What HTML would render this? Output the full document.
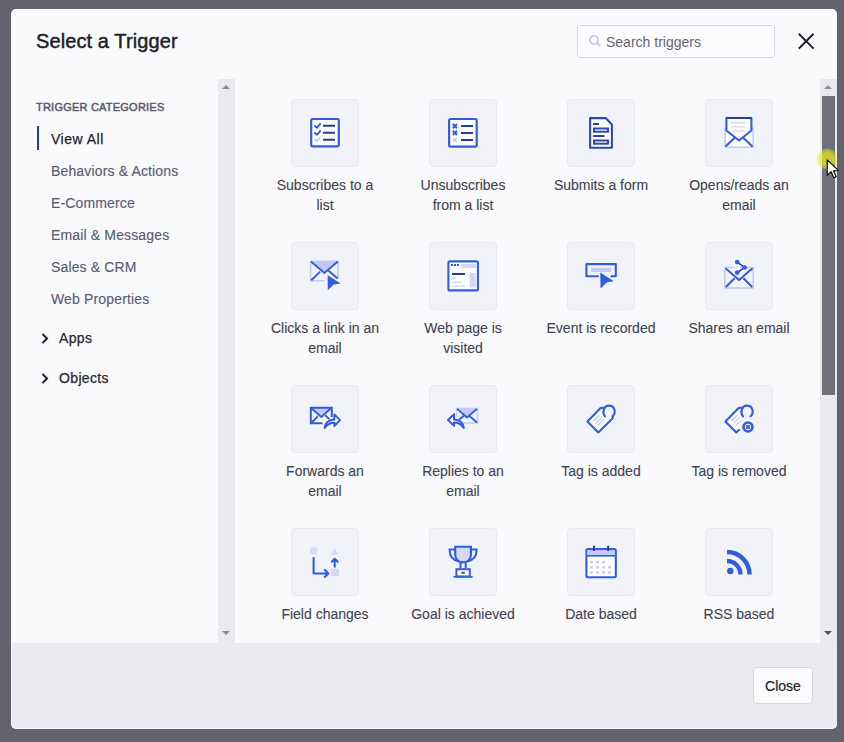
<!DOCTYPE html>
<html><head><meta charset="utf-8">
<style>
*{box-sizing:border-box;margin:0;padding:0}
html,body{width:844px;height:742px;overflow:hidden;background:#63636e;font-family:"Liberation Sans",sans-serif}
.modal{position:absolute;left:11px;top:9px;width:826px;height:720px;background:#fafafc;border-radius:5px;overflow:hidden}
.title{position:absolute;left:25px;top:20px;font-size:20px;line-height:24px;color:#1e1e26;font-weight:normal;letter-spacing:0.1px;-webkit-text-stroke:0.45px #1e1e26}
.search{position:absolute;left:566px;top:16px;width:198px;height:33px;border:1px solid #d6d6e0;border-radius:3px;background:#fcfcfe}
.search span{position:absolute;left:28px;top:8px;font-size:14px;line-height:16px;color:#626475}
.search svg{position:absolute;left:11px;top:9px}
.xclose{position:absolute;left:787px;top:24px}
.side{position:absolute;left:0;top:70px;width:207px;height:564px}
.cathead{position:absolute;left:25px;top:22px;font-size:11px;line-height:12px;font-weight:normal;color:#555868;letter-spacing:0.22px;-webkit-text-stroke:0.45px #555868}
.cat{position:absolute;left:40px;top:0;font-size:14px;line-height:16px;color:#5a5c76;letter-spacing:0.15px;-webkit-text-stroke:0.15px #5a5c76;margin-top:1px}
.cat.active{color:#22222a;letter-spacing:0.5px;-webkit-text-stroke:0.25px #22222a}
.bar{position:absolute;left:26px;top:47px;width:2px;height:24px;background:#1f3fa8}
.grp{position:absolute;left:48px;font-size:14px;line-height:16px;color:#26262e;letter-spacing:0.35px;-webkit-text-stroke:0.25px #26262e}
.chev{position:absolute;left:30px}
.track{position:absolute;background:#eaeaee}
.arrow{position:absolute;width:0;height:0;border-left:4px solid transparent;border-right:4px solid transparent}
.content{position:absolute;left:224px;top:70px;width:585px;height:564px}
.tile{position:absolute;width:68px;height:68px;background:#f2f2f9;border:1px solid #e9e9f3;border-radius:4px}
.tile svg{position:absolute;left:13px;top:13px}
.lbl{position:absolute;width:130px;text-align:center;font-size:14px;line-height:20px;color:#40424f;-webkit-text-stroke:0.1px #40424f}
.footer{position:absolute;left:1px;top:634px;width:825px;height:85px;background:#eaeaf0}
.btn{position:absolute;left:741px;top:24px;width:60px;height:37px;background:#fbfbfd;border:1px solid #d6d6de;border-radius:4px;font-size:14px;line-height:35px;padding-top:1px;text-align:center;color:#22222a;-webkit-text-stroke:0.2px #22222a}
.cursor{position:absolute;left:0;top:0}
</style></head>
<body>
<div class="modal">
  <div class="title">Select a Trigger</div>
  <div class="search">
    <svg width="12" height="12" viewBox="0 0 12 12"><circle cx="5" cy="5" r="4.1" fill="none" stroke="#c0bcd8" stroke-width="1.4"/><path d="M8 8L11.3 11.3" stroke="#c0bcd8" stroke-width="1.5"/></svg>
    <span>Search triggers</span>
  </div>
  <svg class="xclose" width="17" height="17" viewBox="0 0 17 17"><path d="M0.8 0.8L15.6 15.6M15.6 0.8L0.8 15.6" stroke="#1f2129" stroke-width="2"/></svg>

  <div class="side">
    <div class="cathead">TRIGGER CATEGORIES</div>
    <div class="bar"></div>
    <div class="cat active" style="top:51px">View All</div>
    <div class="cat" style="top:83px">Behaviors &amp; Actions</div>
    <div class="cat" style="top:115px">E-Commerce</div>
    <div class="cat" style="top:147px">Email &amp; Messages</div>
    <div class="cat" style="top:179px">Sales &amp; CRM</div>
    <div class="cat" style="top:211px">Web Properties</div>
    <svg class="chev" style="top:254px" width="8" height="11" viewBox="0 0 8 11"><path d="M1.5 1L6 5.5L1.5 10" fill="none" stroke="#22222a" stroke-width="2"/></svg>
    <div class="grp" style="top:251px">Apps</div>
    <svg class="chev" style="top:294px" width="8" height="11" viewBox="0 0 8 11"><path d="M1.5 1L6 5.5L1.5 10" fill="none" stroke="#22222a" stroke-width="2"/></svg>
    <div class="grp" style="top:291px">Objects</div>
  </div>
  <!-- sidebar scrollbar -->
  <div class="track" style="left:207px;top:70px;width:17px;height:564px"></div>
  <div class="arrow" style="left:211px;top:76px;border-bottom:4px solid #8a8a90"></div>
  <div class="arrow" style="left:211px;top:622px;border-top:4px solid #8a8a90"></div>
  <!-- content scrollbar -->
  <div class="track" style="left:809px;top:70px;width:17px;height:564px"></div>
  <div class="arrow" style="left:813px;top:76px;border-bottom:4px solid #909098"></div>
  <div class="arrow" style="left:813px;top:622px;border-top:4px solid #505056"></div>
  <div style="position:absolute;left:811px;top:87px;width:13px;height:299px;background:#707078"></div>

  <div class="tile" style="left:280px;top:90px"><svg width="40" height="40" viewBox="0 0 40 40"><rect x="6.2" y="6" width="27.6" height="27.4" rx="1.6" fill="#ffffff" stroke="#2f5dde" stroke-width="2.2"/>
<path d="M9.8 12.8L11.9 14.8L15.2 10.9M9.8 19.8L11.9 21.8L15.2 17.9" fill="none" stroke="#2f5dde" stroke-width="1.8" stroke-linecap="round" stroke-linejoin="round"/>
<path d="M10 26.6L11.9 28.4L14.8 25" fill="none" stroke="#c3c9f0" stroke-width="1.6" stroke-linecap="round"/>
<path d="M18 12.8H30M18 19.8H30M18 26.7H30" stroke="#2a3d94" stroke-width="2"/></svg></div>
  <div class="lbl" style="left:249px;top:166px">Subscribes to a<br>list</div>
  <div class="tile" style="left:418px;top:90px"><svg width="40" height="40" viewBox="0 0 40 40"><rect x="6.1" y="6" width="27.6" height="27.6" rx="1.6" fill="#ffffff" stroke="#2f5dde" stroke-width="2.2"/>
<path d="M9.8 11L14 15.2M14 11L9.8 15.2M9.8 17.8L14 22M14 17.8L9.8 22" fill="none" stroke="#2f5dde" stroke-width="2"/>
<path d="M10 25.2L13.6 28.8M13.6 25.2L10 28.8" fill="none" stroke="#c3c9f0" stroke-width="1.6"/>
<path d="M18 13H30M18 20H30M18 27H30" stroke="#2a3d94" stroke-width="2"/></svg></div>
  <div class="lbl" style="left:387px;top:166px">Unsubscribes<br>from a list</div>
  <div class="tile" style="left:556px;top:90px"><svg width="40" height="40" viewBox="0 0 40 40"><path d="M9.1 5.1H24.6L30.9 11.4V34.8H9.1Z" fill="#ffffff" stroke="#2f48b0" stroke-width="2.1" stroke-linejoin="round"/>
<path d="M12 11H18M12 23H23.5" stroke="#2f48b0" stroke-width="2"/>
<rect x="13" y="15.5" width="14" height="3.2" fill="none" stroke="#2f48b0" stroke-width="2"/>
<rect x="13" y="27.5" width="14" height="3.2" fill="none" stroke="#2f48b0" stroke-width="2"/></svg></div>
  <div class="lbl" style="left:525px;top:166px">Submits a form</div>
  <div class="tile" style="left:694px;top:90px"><svg width="40" height="40" viewBox="0 0 40 40"><rect x="6.1" y="15.2" width="28" height="19" fill="#ffffff" stroke="#c3c9f0" stroke-width="1.5"/>
<path d="M7.4 17.5V5H32.4V17.5L20 27.5Z" fill="#ffffff" stroke="#2f5dde" stroke-width="2.1" stroke-linejoin="round"/>
<path d="M7.4 5H32.4" stroke="#2a3d94" stroke-width="2.1"/>
<path d="M12 9.8H26M12 13.9H26M14 18H26" stroke="#d5daf3" stroke-width="1.4"/>
<path d="M6.5 33.5L16 24.5M33.5 33.5L24 24.5" stroke="#2f5dde" stroke-width="2.1"/></svg></div>
  <div class="lbl" style="left:663px;top:166px">Opens/reads an<br>email</div>
  <div class="tile" style="left:280px;top:233px"><svg width="40" height="40" viewBox="0 0 40 40"><path d="M5.6 5.2H33V23M19.5 24.8H5.6V5.2" fill="none" stroke="#c3c9f0" stroke-width="1.6"/>
<path d="M5.6 5.2H33L19.4 16.8Z" fill="#c3c9f0"/>
<path d="M6 5.5L19.4 17L32.8 5.5M6.3 24.3L15.2 15.6M32.6 22.5L23.5 14.8" fill="none" stroke="#2f5dde" stroke-width="1.9"/>
<path d="M22.6 19.2L35.6 27.5L28.7 28.5L22.8 34.3Z" fill="#2f5dde"/></svg></div>
  <div class="lbl" style="left:249px;top:309px">Clicks a link in an<br>email</div>
  <div class="tile" style="left:418px;top:233px"><svg width="40" height="40" viewBox="0 0 40 40"><rect x="5.4" y="5.4" width="29.5" height="29" rx="1.5" fill="#ffffff" stroke="#2f5dde" stroke-width="2.1"/>
<path d="M8 9H10M11 9H13M14 9H16" stroke="#2f5dde" stroke-width="2"/>
<rect x="18" y="8" width="15" height="4" fill="#d5daf3"/>
<path d="M9 18H22" stroke="#2a3d94" stroke-width="2"/>
<path d="M9 22.3H13M9 26.3H19M9 30.3H22" stroke="#d5daf3" stroke-width="1.5"/>
<rect x="26.5" y="17" width="6" height="14.5" fill="#d5daf3"/></svg></div>
  <div class="lbl" style="left:387px;top:309px">Web page is<br>visited</div>
  <div class="tile" style="left:556px;top:233px"><svg width="40" height="40" viewBox="0 0 40 40"><path d="M17.8 20.3H5.4V8.1H34.8V20.3H29.5" fill="none" stroke="#2f5dde" stroke-width="2.1" stroke-linejoin="round"/>
<rect x="10" y="11.8" width="20" height="4.2" fill="#c3c9f0"/>
<path d="M19.3 16.6L32.9 25.3L26 26.2L19.5 32.6Z" fill="#2f5dde"/></svg></div>
  <div class="lbl" style="left:525px;top:309px">Event is recorded</div>
  <div class="tile" style="left:694px;top:233px"><svg width="40" height="40" viewBox="0 0 40 40"><path d="M5.8 11.6H15.5M21 11.6H34.2V32H5.8V11.6" fill="none" stroke="#c3c9f0" stroke-width="1.5"/>
<path d="M6.5 12.3L20 24L33.5 12.3M6.8 31L15.6 22.3M33.2 31L24.4 22.3" fill="none" stroke="#2f5dde" stroke-width="2" stroke-linejoin="round"/>
<path d="M18.2 6.1L25.7 11.5L18.2 16.6" fill="none" stroke="#2a3d94" stroke-width="1.5"/>
<circle cx="18.2" cy="6.1" r="2.3" fill="#2f5dde"/><circle cx="25.7" cy="11.5" r="2.3" fill="#2f5dde"/><circle cx="18.2" cy="16.6" r="2.3" fill="#2f5dde"/></svg></div>
  <div class="lbl" style="left:663px;top:309px">Shares an email</div>
  <div class="tile" style="left:280px;top:376px"><svg width="40" height="40" viewBox="0 0 40 40"><path d="M5.8 8.8H26.8L16.3 17.6Z" fill="#c3c9f0"/>
<path d="M17.4 24.3H5.8V8.8H26.8V18" fill="none" stroke="#2f5dde" stroke-width="2"/>
<path d="M6.4 9.3L16.3 18L25.9 9.3M6.8 23.5L12.8 17.3M24.2 20.1L20.3 16.3" fill="none" stroke="#2f5dde" stroke-width="1.9"/>
<path d="M19.6 29C20.2 24.4 23.6 21 29.4 20.6V15.4L35 21.1L29.4 26.9V23.7C25 23.7 22 25.7 19.6 29Z" fill="#ffffff" stroke="#2f5dde" stroke-width="2" stroke-linejoin="round"/></svg></div>
  <div class="lbl" style="left:249px;top:452px">Forwards an<br>email</div>
  <div class="tile" style="left:418px;top:376px"><svg width="40" height="40" viewBox="0 0 40 40"><path d="M13.5 9.5H34.5L24 18.3Z" fill="#c3c9f0"/>
<path d="M13.5 9.5H34.5V24H18.5M13.5 9.5V18" fill="none" stroke="#c3c9f0" stroke-width="1.6"/>
<path d="M14 9.9L24 18.4L34 9.9M34 23.4L26.2 16.8M16.3 20.4L21.6 16" fill="none" stroke="#2f5dde" stroke-width="1.9"/>
<path d="M20.8 29C20.2 24.4 16.8 21 11 20.6V15.2L5 20.9L11 26.7V23.5C15.4 23.5 18.4 25.7 20.8 29Z" fill="#ffffff" stroke="#2f5dde" stroke-width="2" stroke-linejoin="round"/></svg></div>
  <div class="lbl" style="left:387px;top:452px">Replies to an<br>email</div>
  <div class="tile" style="left:556px;top:376px"><svg width="40" height="40" viewBox="0 0 40 40"><path d="M22.8 8.5L19.6 9.1L6.4 22.5L17.3 33.5L31.6 19.3L31.8 17" fill="#ffffff" stroke="#2f5dde" stroke-width="2.1" stroke-linejoin="round"/>
<path d="M12.5 22.3L18.5 16.3M14.6 24.4L20.6 18.4M16.7 26.5L22.7 20.5" stroke="#c3c9f0" stroke-width="1.3"/>
<path d="M24 17.4C21 14.2 22.4 6.6 28 6.6C33.2 6.6 35.8 13.2 31.6 17.2" fill="none" stroke="#2f5dde" stroke-width="2.1" stroke-linecap="round"/></svg></div>
  <div class="lbl" style="left:525px;top:452px">Tag is added</div>
  <div class="tile" style="left:694px;top:376px"><svg width="40" height="40" viewBox="0 0 40 40"><path d="M20.6 30.3L17.3 33.5L6.4 22.5L19.6 9.1L22.8 8.5" fill="#ffffff" stroke="#2f5dde" stroke-width="2.1" stroke-linejoin="round"/>
<path d="M12.5 22.3L18.5 16.3M14.6 24.4L20.6 18.4M16.7 26.5L21.5 21.7" stroke="#c3c9f0" stroke-width="1.3"/>
<path d="M24 17.4C21 14.2 22.4 6.6 28 6.6C33.2 6.6 35.8 13.2 31.6 17.2" fill="none" stroke="#2f5dde" stroke-width="2.1" stroke-linecap="round"/>
<circle cx="29" cy="28" r="4.5" fill="#ffffff" stroke="#2f5dde" stroke-width="2.6"/>
<path d="M27.2 26.2L30.8 29.8M30.8 26.2L27.2 29.8" stroke="#2f5dde" stroke-width="1.8"/></svg></div>
  <div class="lbl" style="left:663px;top:452px">Tag is removed</div>
  <div class="tile" style="left:280px;top:519px"><svg width="40" height="40" viewBox="0 0 40 40"><circle cx="8.6" cy="8.8" r="3.7" fill="#d5daf3"/>
<path d="M29.9 6.2L33.5 12.6H26.3Z" fill="#d5daf3"/>
<rect x="25.6" y="26.8" width="8.4" height="7.4" fill="#d5daf3"/>
<path d="M8.6 15.3V31.5H22.5" fill="none" stroke="#2f5dde" stroke-width="2.1" stroke-linejoin="round"/>
<path d="M19.8 28L23.3 31.5L19.8 35" fill="none" stroke="#2f5dde" stroke-width="2.1" stroke-linecap="round" stroke-linejoin="round"/>
<path d="M29.7 24.8V17M26.8 19.8L29.7 16.8L32.6 19.8" fill="none" stroke="#2f5dde" stroke-width="2.1" stroke-linecap="round" stroke-linejoin="round"/></svg></div>
  <div class="lbl" style="left:249px;top:595px">Field changes</div>
  <div class="tile" style="left:418px;top:519px"><svg width="40" height="40" viewBox="0 0 40 40"><path d="M12.2 4.8H28V12.5C28 17 24.8 20.4 20.1 20.4C15.4 20.4 12.2 17 12.2 12.5Z" fill="#d5daf3" stroke="#2f5dde" stroke-width="2.1"/>
<path d="M12.2 7.5H6.6C6.6 14 10 18.5 16 19.5M28 7.5H33.6C33.6 14 30.2 18.5 24.2 19.5" fill="none" stroke="#2f5dde" stroke-width="2"/>
<path d="M17.5 20.4V26.3M22.7 20.4V26.3" stroke="#2f5dde" stroke-width="2"/>
<rect x="13.4" y="27.2" width="13.4" height="7.3" fill="#ffffff" stroke="#2f5dde" stroke-width="2"/>
<path d="M10.5 34.8H29.6" stroke="#2f5dde" stroke-width="1.8"/>
<path d="M18.4 30.8H21.8" stroke="#2a3d94" stroke-width="1.8"/></svg></div>
  <div class="lbl" style="left:387px;top:595px">Goal is achieved</div>
  <div class="tile" style="left:556px;top:519px"><svg width="40" height="40" viewBox="0 0 40 40"><rect x="5.4" y="7.1" width="29.4" height="28.2" rx="1.6" fill="#ffffff" stroke="#2f5dde" stroke-width="2.1"/>
<rect x="6.4" y="8.1" width="27.4" height="5.6" fill="#c3c9f0"/>
<path d="M5.4 13.8H34.8" stroke="#2f5dde" stroke-width="1.6"/>
<path d="M13 3.8V9M27.2 3.8V9" stroke="#2a3d94" stroke-width="2"/>
<g fill="#c3c9f0"><rect x="9.3" y="18.8" width="2.6" height="2.6"/><rect x="15.3" y="18.8" width="2.6" height="2.6"/><rect x="21.3" y="18.8" width="2.6" height="2.6"/>
<rect x="9.3" y="24" width="2.6" height="2.6"/><rect x="15.3" y="24" width="2.6" height="2.6"/><rect x="21.3" y="24" width="2.6" height="2.6"/><rect x="27.3" y="24" width="2.6" height="2.6"/>
<rect x="9.3" y="29.2" width="2.6" height="2.6"/><rect x="15.3" y="29.2" width="2.6" height="2.6"/><rect x="21.3" y="29.2" width="2.6" height="2.6"/><rect x="27.3" y="29.2" width="2.6" height="2.6"/></g></svg></div>
  <div class="lbl" style="left:525px;top:595px">Date based</div>
  <div class="tile" style="left:694px;top:519px"><svg width="40" height="40" viewBox="0 0 40 40"><path d="M8 19A13.5 13.5 0 0 1 21.5 32.5M8 10A22.5 22.5 0 0 1 30.5 32.5" fill="none" stroke="#2f5dde" stroke-width="4.4"/>
<circle cx="11.3" cy="29" r="3.2" fill="#2f5dde"/></svg></div>
  <div class="lbl" style="left:663px;top:595px">RSS based</div>
  <div class="footer">
    <div class="btn">Close</div>
  </div>
</div>
<div style="position:absolute;left:816px;top:148px;width:22px;height:22px;border-radius:50%;background:radial-gradient(circle closest-side,rgba(238,238,30,0.7) 55%,rgba(238,238,30,0.45) 85%,rgba(238,238,30,0) 100%)"></div>
<svg style="position:absolute;left:826px;top:159px" width="14" height="21" viewBox="0 0 14 21"><path d="M1.2 0.8V16.2L5 12.6L7.8 18.8L10.2 17.7L7.5 11.7H12.6Z" fill="#fff" stroke="#000" stroke-width="1.1" stroke-linejoin="round"/></svg>
</body></html>
